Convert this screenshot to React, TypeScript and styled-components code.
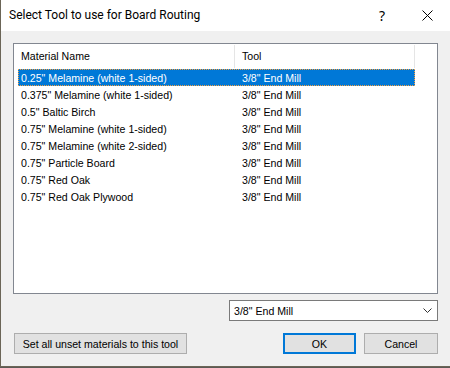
import React from "react";
import styled, { createGlobalStyle } from "styled-components";

const Global = createGlobalStyle`
  html, body { margin: 0; padding: 0; background: #5c5a55; }
  body { width: 450px; height: 368px; overflow: hidden; }
  * { box-sizing: border-box; }
`;

const Window = styled.div`
  width: 450px;
  height: 367px;
  display: flex;
  flex-direction: column;
  background: #f0f0f0;
  border-left: 1px solid #6b6557;
  border-bottom: 1px solid #6b6557;
  font-family: "Liberation Sans", Arial, sans-serif;
  font-size: 11px;
  color: #000;
`;

const TitleBar = styled.div`
  height: 31px;
  flex: none;
  background: #fff;
  display: flex;
  align-items: center;
  padding-left: 8px;
`;

const Title = styled.div`
  flex: 1;
  font-family: "Roboto", "Liberation Sans", sans-serif;
  font-size: 12px;
  color: #000;
  padding-bottom: 1px;
`;

const CaptionButton = styled.div<{ $w: number }>`
  width: ${(p) => p.$w}px;
  height: 31px;
  display: flex;
  align-items: center;
  justify-content: center;
  font-family: "Noto Sans", sans-serif;
  font-size: 14px;
  color: #000;
`;

const Body = styled.div`
  flex: 1;
  display: flex;
  flex-direction: column;
  padding: 12px 12px 0 12px;
`;

const ListBox = styled.div`
  height: 251px;
  background: #fff;
  border: 1px solid #828790;
  display: flex;
  flex-direction: column;
`;

const Header = styled.div`
  height: 25px;
  display: flex;
  align-items: stretch;
`;

const HeaderCell = styled.div<{ $w: number }>`
  width: ${(p) => p.$w}px;
  display: flex;
  align-items: center;
  padding-left: 7px;
  padding-bottom: 2px;
  border-right: 1px solid #e5e5e5;
  margin: 1px 0 1px 0;
  color: #000;
  font-size: 10.6px;
`;

const Rows = styled.div`
  display: flex;
  flex-direction: column;
  padding-left: 4px;
`;

const Row = styled.div<{ $sel?: boolean }>`
  width: 397px;
  height: 17px;
  display: flex;
  align-items: center;
  background: ${(p) => (p.$sel ? "#0078d7" : "transparent")};
  color: ${(p) => (p.$sel ? "#fff" : "#000")};
  border: 1px dotted ${(p) => (p.$sel ? "#f5a040" : "transparent")};
`;

const Cell = styled.div<{ $w?: number }>`
  width: ${(p) => (p.$w ? `${p.$w}px` : "auto")};
  padding-left: 2px;
  white-space: nowrap;
  font-size: 10.6px;
`;

const ComboRow = styled.div`
  display: flex;
  justify-content: flex-end;
  margin-top: 6px;
`;

const Combo = styled.div`
  width: 209px;
  height: 21px;
  background: #fff;
  border: 1px solid #7a7a7a;
  display: flex;
  align-items: center;
  padding-left: 4px;
  padding-right: 5px;
  font-size: 10.6px;
`;

const ComboText = styled.div`
  flex: 1;
`;

const ButtonRow = styled.div`
  display: flex;
  align-items: center;
  margin-top: 12px;
  padding-left: 1px;
  gap: 8px;
`;

const Button = styled.div<{ $w: number; $default?: boolean }>`
  width: ${(p) => p.$w}px;
  height: 21px;
  background: #e1e1e1;
  border: ${(p) => (p.$default ? "2px solid #0078d7" : "1px solid #adadad")};
  display: flex;
  align-items: center;
  justify-content: center;
  font-size: 10.6px;
  color: #000;
`;

const Spacer = styled.div`
  flex: 1;
`;

const rows = [
  "0.25\" Melamine (white 1-sided)",
  "0.375\" Melamine (white 1-sided)",
  "0.5\" Baltic Birch",
  "0.75\" Melamine (white 1-sided)",
  "0.75\" Melamine (white 2-sided)",
  "0.75\" Particle Board",
  "0.75\" Red Oak",
  "0.75\" Red Oak Plywood",
];

export default function App() {
  return (
    <>
      <Global />
      <Window>
        <TitleBar>
          <Title>Select Tool to use for Board Routing</Title>
          <CaptionButton $w={44}>?</CaptionButton>
          <CaptionButton $w={46}>
            <svg width="11" height="11" viewBox="0 0 11 11">
              <path d="M0.5 0.5 L10.5 10.5 M10.5 0.5 L0.5 10.5" stroke="#000" strokeWidth="1" />
            </svg>
          </CaptionButton>
        </TitleBar>
        <Body>
          <ListBox>
            <Header>
              <HeaderCell $w={221}>Material Name</HeaderCell>
              <HeaderCell $w={180}>Tool</HeaderCell>
            </Header>
            <Rows>
              {rows.map((r, i) => (
                <Row key={r} $sel={i === 0}>
                  <Cell $w={221}>{r}</Cell>
                  <Cell>3/8" End Mill</Cell>
                </Row>
              ))}
            </Rows>
          </ListBox>
          <ComboRow>
            <Combo>
              <ComboText>3/8" End Mill</ComboText>
              <svg width="9" height="5" viewBox="0 0 9 5">
                <path d="M0.5 0.5 L4.5 4.5 L8.5 0.5" stroke="#333" strokeWidth="1" fill="none" />
              </svg>
            </Combo>
          </ComboRow>
          <ButtonRow>
            <Button $w={173}>Set all unset materials to this tool</Button>
            <Spacer />
            <Button $w={73} $default>OK</Button>
            <Button $w={74}>Cancel</Button>
          </ButtonRow>
        </Body>
      </Window>
    </>
  );
}
